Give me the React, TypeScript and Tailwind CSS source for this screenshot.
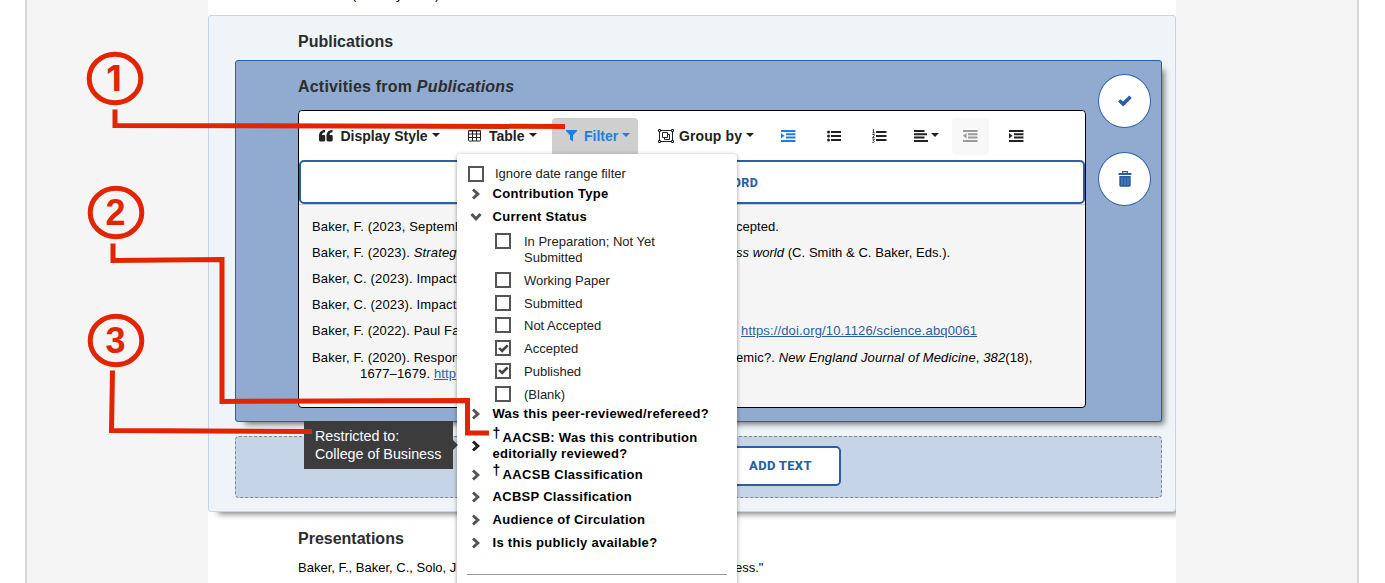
import type { ReactNode } from 'react';

const citations: { left: ReactNode; right?: ReactNode }[] = [
  { left: 'Baker, F. (2023, Septemb', right: 'cepted.' },
  { left: <>Baker, F. (2023). <i>Strateg</i></>, right: <><i>ss world</i> (C. Smith &amp; C. Baker, Eds.).</> },
  { left: 'Baker, C. (2023). Impact' },
  { left: 'Baker, C. (2023). Impact' },
  { left: 'Baker, F. (2022). Paul Fa', right: <a className="ml-[5px] text-[#2b5fa5] underline">https://doi.org/10.1126/science.abq0061</a> },
];

const statuses = [
  { label: 'In Preparation; Not Yet Submitted', checked: false },
  { label: 'Working Paper', checked: false },
  { label: 'Submitted', checked: false },
  { label: 'Not Accepted', checked: false },
  { label: 'Accepted', checked: true },
  { label: 'Published', checked: true },
  { label: '(Blank)', checked: false },
];

const laterGroups = ['ACBSP Classification', 'Audience of Circulation', 'Is this publicly available?'];

function CheckMark({ className }: { className: string }) {
  return (
    <svg viewBox="0 0 14 12" className={className} fill="currentColor">
      <path d="M0 6.400 2.300 4.200 5 6.600 11.300.5 13.800 2.900 5.200 11.500Z" />
    </svg>
  );
}

function Checkbox({ checked }: { checked?: boolean }) {
  return (
    <span className="flex h-4 w-4 shrink-0 items-center justify-center border-2 border-[#555] bg-white text-[#444]">
      {checked && <CheckMark className="h-[9px] w-[11px]" />}
    </span>
  );
}

function Chevron({ open, dark }: { open?: boolean; dark?: boolean }) {
  return (
    <svg
      viewBox="0 0 12 12"
      className={`h-3 w-3 shrink-0 ${open ? 'rotate-90' : ''} ${dark ? 'text-[#222]' : 'text-[#555]'}`}
      fill="none"
      stroke="currentColor"
      strokeWidth="3"
    >
      <path d="M3 1.500 7.800 6 3 10.500" />
    </svg>
  );
}

function Caret() {
  return <span className="-mt-0.5 h-0 w-0 border-x-[4px] border-t-[4px] border-x-transparent border-t-current" />;
}

function Dagger() {
  return <span className="relative -top-1 mr-[2px] text-[14px] leading-none">†</span>;
}

function QuoteIcon() {
  return (
    <svg viewBox="0 0 14 12" className="h-3 w-3.5" fill="currentColor">
      <path d="M6 0v2.2C4 2.4 3 3.4 3 5h2c.7 0 1.2.5 1.2 1.200v3.900c0 .8-.5 1.300-1.200 1.300H1.400C.6 11.400 0 10.900 0 10.100V5.800C0 2.300 2.200 0 6 0Zm7.500 0v2.200c-2 .2-3 1.200-3 2.800h2c.7 0 1.200.5 1.200 1.200v3.900c0 .8-.5 1.300-1.200 1.300H8.900c-.8 0-1.400-.5-1.400-1.300V5.800C7.500 2.300 9.700 0 13.500 0Z" />
    </svg>
  );
}

function TableIcon() {
  return (
    <svg viewBox="0 0 13 12" className="h-3 w-[13px]" fill="none" stroke="currentColor">
      <rect x=".5" y=".5" width="12" height="10.500" rx=".8" />
      <path d="M0 1h13M0 4h13M0 7.500h13M4.500 1v10M8.500 1v10" />
    </svg>
  );
}

function FilterIcon() {
  return (
    <svg viewBox="0 0 11 12" className="h-3 w-[11px]" fill="currentColor">
      <path d="M0 0h11v.9L7 5.200V11.600L4 9.500V5.200L0 .9Z" />
    </svg>
  );
}

function GroupIcon() {
  return (
    <svg viewBox="0 0 16 14" className="h-3.5 w-4" fill="none" stroke="currentColor">
      <path d="M2.500 1.500h11M2.500 12.500h11M1.500 2.500v9M14.500 2.500v9" />
      <path d="M.5.500h2v2h-2zM13.500.500h2v2h-2zM.5 11.500h2v2h-2zM13.500 11.500h2v2h-2z" />
      <path d="M4.500 3.500h5v5h-5zM9.500 5.500h2v5h-5v-2" />
    </svg>
  );
}

function IndentIcon({ outdent }: { outdent?: boolean }) {
  return (
    <svg viewBox="0 0 15 12" className="h-3 w-[15px]" fill="currentColor">
      <path d="M0 0h14.500v2H0zM5 3.300h9.500v2H5zM5 6.600h9.500v2H5zM0 9.900h14.500v2H0z" />
      <path d={outdent ? 'M3.500 3v5.500L0 5.800Z' : 'M0 3v5.500L3.500 5.800Z'} />
    </svg>
  );
}

function BulletIcon() {
  return (
    <svg viewBox="0 0 15 12" className="h-3 w-[15px]" fill="currentColor">
      <path d="M4 1h10v2H4zM4 5h10v2H4zM4 9h10v2H4z" />
      <circle cx="1.500" cy="2" r="1.500" />
      <circle cx="1.500" cy="6" r="1.500" />
      <circle cx="1.500" cy="10" r="1.500" />
    </svg>
  );
}

function NumberedIcon() {
  return (
    <svg viewBox="0 0 15 14" className="h-3.5 w-[15px]" fill="currentColor">
      <path d="M4 2h10.500v2H4zM4 6h10.500v2H4zM4 10h10.500v2H4z" />
      <path d="M.6 1 1.600.500V3.900M.5 3.900h2.300M.4 5.500h1.900v1L.6 8.600h2M.4 10h2L1.200 11.400c2 .3 1 2.500-.9 1.900" fill="none" stroke="currentColor" strokeWidth=".9" />
    </svg>
  );
}

function AlignIcon() {
  return (
    <svg viewBox="0 0 14 12" className="h-3 w-3.5" fill="currentColor">
      <path d="M0 0h10.500v2H0zM0 3.300h13v2H0zM0 6.600h10.500v2H0zM0 9.900h14v2H0z" />
    </svg>
  );
}

function Toolbar() {
  return (
    <div className="flex h-[49px] items-center rounded-t bg-white pl-5 text-sm font-bold text-[#222]">
      <div className="flex w-[149px] items-center">
        <QuoteIcon />
        <span className="ml-[7.500px] mr-1">Display Style</span>
        <Caret />
      </div>
      <div className="flex w-[84px] items-center">
        <TableIcon />
        <span className="ml-2 mr-1">Table</span>
        <Caret />
      </div>
      <div className="mt-0.5 flex h-[38px] w-[86px] items-center rounded bg-[#cfcfcf] pb-0.5 pl-[14px] text-[#1d7fe6]">
        <FilterIcon />
        <span className="ml-[7px] mr-1">Filter</span>
        <Caret />
      </div>
      <div className="ml-5 flex w-[123px] items-center">
        <GroupIcon />
        <span className="ml-[5px] mr-1 tracking-[0.1px]">Group by</span>
        <Caret />
      </div>
      <div className="w-[46px] text-[#1d7fe6]"><IndentIcon /></div>
      <div className="w-[45px]"><BulletIcon /></div>
      <div className="w-[42px]"><NumberedIcon /></div>
      <div className="flex w-[38px] items-center gap-[3px]">
        <AlignIcon />
        <Caret />
      </div>
      <div className="mt-0.5 flex h-[37px] w-[37px] items-center justify-center rounded bg-[#f8f8f8] pb-0.5 text-[#999]">
        <IndentIcon outdent />
      </div>
      <div className="ml-5"><IndentIcon /></div>
    </div>
  );
}

function RoundButton({ children, label }: { children: ReactNode; label: string }) {
  return (
    <button aria-label={label} className="flex h-[54px] w-[53px] items-center justify-center rounded-[50%] border border-[#2b5fa5] bg-white text-[#2b5fa5]">
      {children}
    </button>
  );
}

function ActivityEditor() {
  return (
    <div className="h-[298px] w-[788px] rounded border border-black bg-[#f5f5f5]">
      <Toolbar />
      <button className="flex h-11 w-full items-center rounded-[5px] border-2 border-[#2b5fa5] bg-white pl-[366px] pt-0.5 font-[Roboto] text-[12.500px] font-extrabold tracking-[0.300px] text-[#2b5fa5]">
        ADD A RECORD
      </button>
      <div className="border-t border-[#ccc] pl-[13px] pt-[9px] text-[13px] text-black">
        {citations.map((item, i) => (
          <div key={i} className="flex h-[26px] items-center whitespace-nowrap">
            <span className="w-[424px] tracking-[0.150px]">{item.left}</span>
            <span className="tracking-[0.050px] [&>a]:tracking-[0.150px]">{item.right}</span>
          </div>
        ))}
        <div className="mt-1.5 leading-4">
          <div className="flex whitespace-nowrap">
            <span className="w-[424px] tracking-[0.150px]">Baker, F. (2020). Respon</span>
            <span className="tracking-[0.110px]">emic?. <i>New England Journal of Medicine</i>, <i>382</i>(18),</span>
          </div>
          <div className="pl-[48px] tracking-[0.150px]">1677–1679. <a className="text-[#2b5fa5] underline">http</a></div>
        </div>
      </div>
    </div>
  );
}

function FilterMenu() {
  return (
    <div className="absolute left-[457px] top-[154px] h-[440px] w-[280px] rounded-sm bg-white pl-[11px] pt-[11px] text-[13px] leading-4 text-[#222] shadow-[0_1px_4px_rgba(0,0,0,0.4)]">
      <label className="flex h-[17px] items-center gap-[11px]">
        <Checkbox />
        <span>Ignore date range filter</span>
      </label>
      <div className="flex h-[23px] items-center gap-[10.500px] pl-0.5 font-bold tracking-[0.300px] text-black">
        <Chevron />
        <span>Contribution Type</span>
      </div>
      <div className="flex h-[23px] items-center gap-[10.500px] pl-0.5 font-bold tracking-[0.300px] text-black">
        <Chevron open />
        <span>Current Status</span>
      </div>
      <div className="mt-[5px] flex flex-col gap-[5.800px] pl-[27px]">
        {statuses.map((status) => (
          <label key={status.label} className="flex gap-[13px]">
            <Checkbox checked={status.checked} />
            <span className="w-[150px] pt-px">{status.label}</span>
          </label>
        ))}
      </div>
      <div className="flex h-[23px] items-center gap-[10.500px] pl-0.5 font-bold tracking-[0.300px] text-black">
        <Chevron />
        <span>Was this peer-reviewed/refereed?</span>
      </div>
      <div className="mt-0.5 flex h-9 items-center gap-[10.500px] pl-0.5 font-bold tracking-[0.300px] text-black">
        <Chevron dark />
        <span className="w-[235px]"><Dagger />AACSB: Was this contribution editorially reviewed?</span>
      </div>
      <div className="flex h-[22.300px] items-center gap-[10.500px] pl-0.5 font-bold tracking-[0.300px] text-black">
        <Chevron />
        <span><Dagger />AACSB Classification</span>
      </div>
      {laterGroups.map((name) => (
        <div key={name} className="flex h-[22.700px] items-center gap-[10.500px] pl-0.5 font-bold tracking-[0.300px] text-black">
          <Chevron />
          <span>{name}</span>
        </div>
      ))}
      <hr className="ml-[-1px] mr-2.5 mt-5 border-[#999]" />
    </div>
  );
}

function Callouts() {
  return (
    <svg className="pointer-events-none absolute left-0 top-0 h-[583px] w-[600px]" viewBox="0 0 600 583">
      <g fill="none" stroke="#e32400" strokeWidth="5">
        <ellipse cx="115" cy="78.500" rx="25.800" ry="24.300" />
        <ellipse cx="116" cy="212.500" rx="25.800" ry="24.300" />
        <ellipse cx="116" cy="340.500" rx="25.800" ry="24.300" />
        <path d="M115 109.500V125.500L565 126.500" />
        <path d="M113 243.500V260.500L222 259.500V401.500L467.500 400.500V433H489" />
        <path d="M112.500 370.500 111.500 430.500 312 431.500" />
      </g>
      <g fill="#e32400" textAnchor="middle" className="text-[36px] font-bold">
        <text x="114" y="91" className="font-[Inter]">1</text>
        <text x="115.500" y="224.500">2</text>
        <text x="115.500" y="352.500">3</text>
      </g>
    </svg>
  );
}

export default function App() {
  return (
    <div className="relative h-[583px] w-[1385px] overflow-hidden bg-white font-['Liberation_Sans',sans-serif]">
      <div className="ml-[25px] flex h-full w-[1334px] justify-center border-x-2 border-[#d8d8d8] bg-[#f5f5f5]">
        <main className="h-full w-[968px] bg-white">
          <div className="h-[15px] overflow-hidden pl-[144px] text-[13px] text-black">
            <div className="-mt-[13px] leading-4">(January 2024)</div>
          </div>
          <section className="h-[497px] rounded-[3px] border border-[#c5d5e9] bg-[#eff4f9] pl-[26px] shadow-[6px_6px_6px_-4px_rgba(0,0,0,0.5)] [clip-path:inset(0_0_-12px_0)]">
            <h2 className="flex h-11 items-center pl-[63px] pt-[7px] text-base font-bold text-[#2d2d2d]">Publications</h2>
            <div className="h-[362px] w-[927px] rounded-[3px] border border-[#2b5fa5] bg-[#90aad0] pl-[62px] shadow-[6px_6px_6px_-4px_rgba(0,0,0,0.55)]">
              <div className="flex">
                <div>
                  <h3 className="flex h-[49px] items-center pt-[3px] text-base font-bold tracking-[0.200px] text-[#2d2d2d]">
                    <span>Activities from <i>Publications</i></span>
                  </h3>
                  <ActivityEditor />
                </div>
                <div className="ml-3 mt-[13px] flex flex-col gap-6">
                  <RoundButton label="Done"><CheckMark className="h-3 w-3.5" /></RoundButton>
                  <RoundButton label="Delete">
                    <svg viewBox="0 0 14 16" className="h-4 w-3.5" fill="currentColor">
                      <path d="M4 2V.5C4 .2 4.200 0 4.500 0h5c.3 0 .5.200.5.500V2h3.500v2H.500V2ZM5.200 1.200V2h3.600v-.8ZM1.300 5h11.400v9.500c0 .8-.5 1.200-1.200 1.200h-9c-.7 0-1.200-.4-1.200-1.200Z" />
                      <path d="M4 6.500v7.500M7 6.500v7.500M10 6.500v7.500" stroke="#7d9dcc" strokeWidth=".7" />
                    </svg>
                  </RoundButton>
                </div>
              </div>
            </div>
            <div className="mt-3.5 flex h-[62px] w-[927px] items-center justify-end rounded border border-dashed border-[#888] bg-[#c6d4e8] pb-[3px] pr-[320px]">
              <button className="flex h-10 w-[121px] items-center justify-center rounded-[5px] border-2 border-[#2b5fa5] bg-white font-[Roboto] text-[13px] font-extrabold tracking-[0.300px] text-[#2b5fa5]">
                ADD TEXT
              </button>
            </div>
          </section>
          <h2 className="pl-[90px] pt-[15px] text-base font-bold text-[#2d2d2d]">Presentations</h2>
          <div className="flex whitespace-nowrap pl-[90px] pt-[9px] text-[13px] leading-4 text-black">
            <span className="w-[437px]">Baker, F., Baker, C., Solo, J.</span>
            <span>ess."</span>
          </div>
        </main>
      </div>
      <div className="absolute left-[304px] top-[421px] h-12 w-[149px] bg-[#3c3c3c] pl-[11px] pt-1.5 text-[14.300px] leading-[18px] text-white">
        Restricted to:<br />College of Business
      </div>
      <FilterMenu />
      <div className="absolute left-[453px] top-[440px] border-y-[5px] border-l-[5px] border-y-transparent border-l-[#3c3c3c]" />
      <Callouts />
    </div>
  );
}
